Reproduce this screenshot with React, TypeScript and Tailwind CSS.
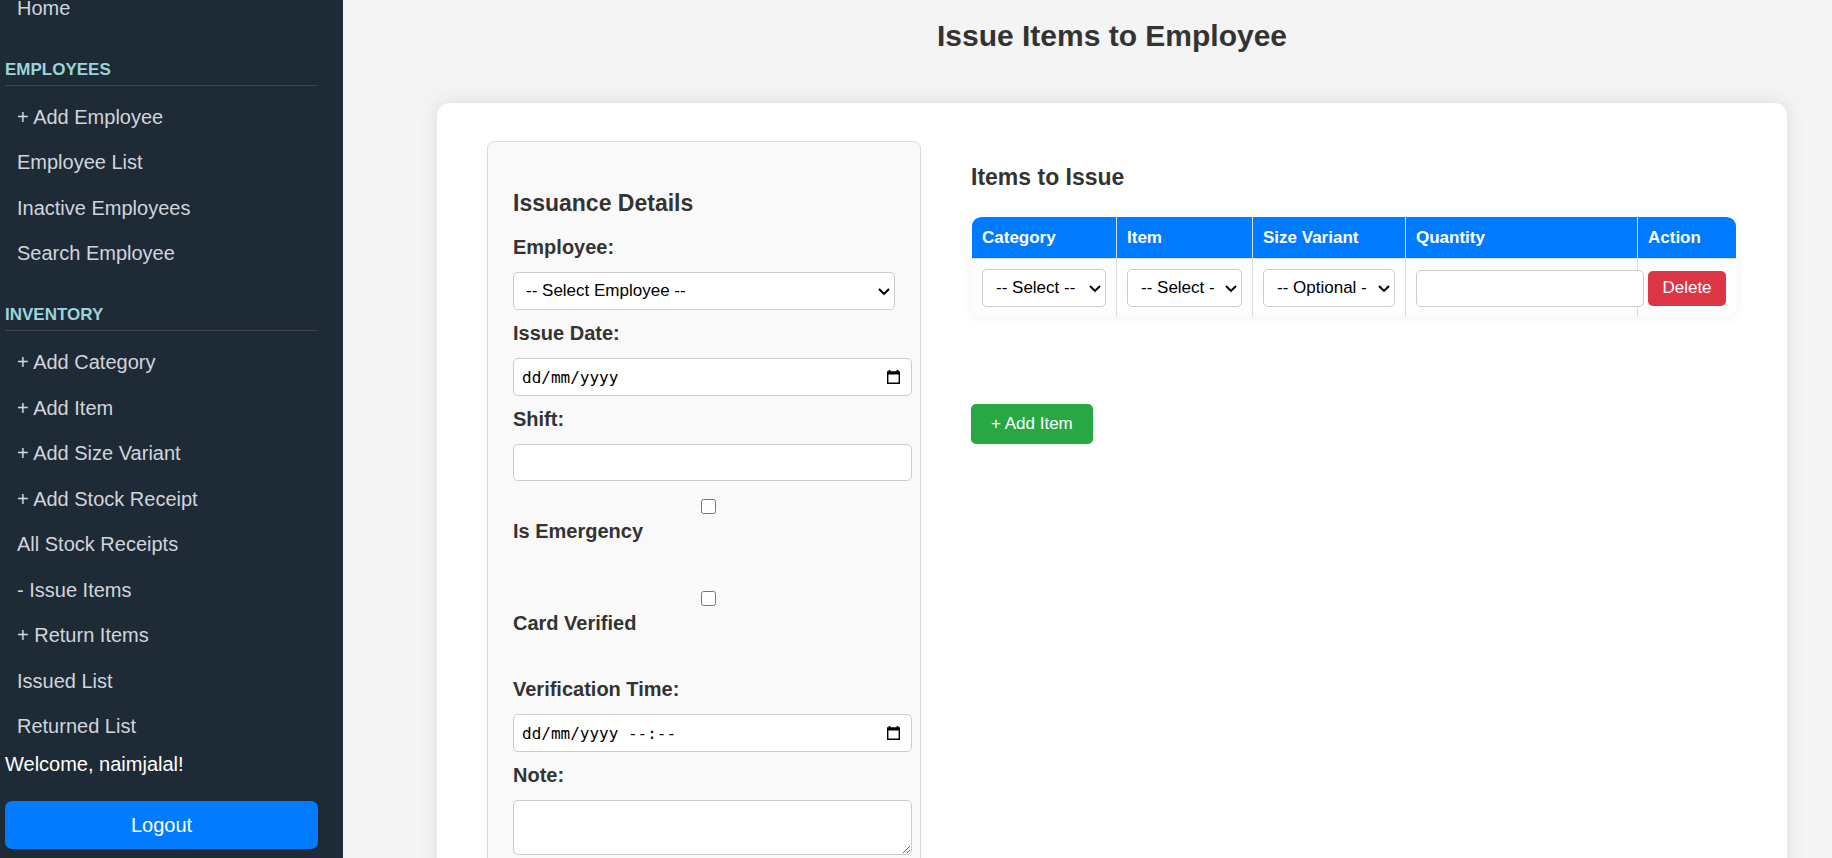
import React from 'react';

const employeeLinks = ['+ Add Employee', 'Employee List', 'Inactive Employees', 'Search Employee'];

const inventoryLinks = [
  '+ Add Category',
  '+ Add Item',
  '+ Add Size Variant',
  '+ Add Stock Receipt',
  'All Stock Receipts',
  '- Issue Items',
  '+ Return Items',
  'Issued List',
  'Returned List',
];

const fieldClass =
  'block w-[calc(100%+17px)] h-[37px] px-2 border border-[#ccc] rounded-[5px] bg-white text-[17px] text-black outline-none focus:border-[#007bff]';

function NavLink({ label }: { label: string }) {
  return (
    <li>
      <a href="#" className="block py-2.5 pl-3 text-[20px] leading-[25px] text-[#d1d5db] hover:text-white">
        {label}
      </a>
    </li>
  );
}

function NavSection({ title, links, listClass }: { title: string; links: string[]; listClass: string }) {
  return (
    <section className="mt-[29px]">
      <h4 className="mb-[9px] border-b border-[#444] pb-[5px] text-[17px] leading-5 font-bold text-[#9ad5d8] uppercase">
        {title}
      </h4>
      <ul className={'flex flex-col justify-between ' + listClass}>
        {links.map((l) => (
          <NavLink key={l} label={l} />
        ))}
      </ul>
    </section>
  );
}

function Sidebar() {
  return (
    <aside className="flex h-full w-[343px] shrink-0 flex-col bg-[#1f2a37] pr-[25px] pb-[9px] pl-[5px]">
      <nav className="flex min-h-0 flex-1 flex-col justify-end overflow-hidden">
        <ul>
          <NavLink label="Home" />
        </ul>
        <NavSection title="Employees" links={employeeLinks} listClass="min-h-[181px]" />
        <NavSection title="Inventory" links={inventoryLinks} listClass="min-h-[409px]" />
      </nav>
      <p className="mt-[3px] mb-[25px] text-[20px] leading-6 text-white">Welcome, naimjalal!</p>
      <button type="button" className="h-12 w-full rounded-[7px] bg-[#007bff] text-[20px] text-white">
        Logout
      </button>
    </aside>
  );
}

function Select({ id, label, text, padding }: { id: string; label?: string; text: string; padding: string }) {
  return (
    <div className="relative">
      <select
        id={id}
        aria-label={label}
        className={
          'block h-[38px] w-full appearance-none rounded-[5px] border border-[#ccc] bg-white text-[17px] text-black ' +
          padding
        }
      >
        <option>{text}</option>
      </select>
      <svg
        className="pointer-events-none absolute top-4 right-[5px] h-2 w-3"
        viewBox="0 0 12 8"
        fill="none"
        stroke="#000"
        strokeWidth="2.1"
      >
        <path d="M1 1.1 L6 5.9 L11 1.1" />
      </svg>
    </div>
  );
}

function Label({ htmlFor, children }: { htmlFor: string; children: React.ReactNode }) {
  return (
    <label htmlFor={htmlFor} className="block text-[20px] leading-6 font-bold">
      {children}
    </label>
  );
}

function DateField({ id, format }: { id: string; format: string }) {
  return (
    <div className="relative w-[calc(100%+17px)]">
      <input
        id={id}
        type="text"
        placeholder={format}
        className="block h-[38px] w-full rounded-[5px] border border-[#ccc] bg-white px-2 font-['DejaVu_Sans_Mono',monospace] text-[16px] text-black outline-none placeholder:text-black focus:border-[#007bff]"
      />
      <button type="button" aria-label="Open calendar" className="absolute top-3 right-3">
        <svg className="block h-[14px] w-[13px]" viewBox="0 0 13 14" fill="none">
          <path d="M0.7 2.2 H12.3 V13.2 H0.7 Z" stroke="#000" strokeWidth="1.4" />
          <path d="M0 1.4 H13 V4.4 H0 Z M1.6 0 H3.4 V2 H1.6 Z M9.6 0 H11.4 V2 H9.6 Z" fill="#000" />
        </svg>
      </button>
    </div>
  );
}

function CheckField({ id, label }: { id: string; label: string }) {
  return (
    <div className="flex flex-col gap-[5px]">
      <input id={id} type="checkbox" className="ml-[188px] block size-[15px]" />
      <Label htmlFor={id}>{label}</Label>
    </div>
  );
}

function Field({ id, label, children }: { id: string; label: string; children: React.ReactNode }) {
  return (
    <div className="flex flex-col gap-[13px]">
      <Label htmlFor={id}>{label}</Label>
      {children}
    </div>
  );
}

function IssuanceDetails() {
  return (
    <section className="rounded-[7px] border border-[#ddd] bg-[#f9f9f9] px-[25px] pt-[47px] pb-[25px]">
      <h3 className="mb-[18px] text-[23px] leading-7 font-bold">Issuance Details</h3>
      <div className="flex flex-col gap-[11px]">
        <Field id="employee" label="Employee:">
          <Select id="employee" text="-- Select Employee --" padding="pl-3 pr-6" />
        </Field>
        <Field id="issue-date" label="Issue Date:">
          <DateField id="issue-date" format="dd/mm/yyyy" />
        </Field>
        <Field id="shift" label="Shift:">
          <input id="shift" type="text" className={fieldClass} />
        </Field>
      </div>
      <div className="mt-[18px] mb-[42px] flex flex-col gap-12">
        <CheckField id="emergency" label="Is Emergency" />
        <CheckField id="verified" label="Card Verified" />
      </div>
      <div className="flex flex-col gap-[11px]">
        <Field id="verification-time" label="Verification Time:">
          <DateField id="verification-time" format="dd/mm/yyyy --:--" />
        </Field>
        <Field id="note" label="Note:">
          <textarea
            id="note"
            className="block h-[55px] w-[calc(100%+17px)] rounded-[5px] border border-[#ccc] bg-white px-2 text-[17px] text-black outline-none"
          />
        </Field>
      </div>
    </section>
  );
}

const columns = [
  { name: 'Category', width: 'w-[145px]' },
  { name: 'Item', width: 'w-[136px]' },
  { name: 'Size Variant', width: 'w-[153px]' },
  { name: 'Quantity', width: 'w-[232px]' },
  { name: 'Action', width: 'w-[98px]' },
];

function ItemsToIssue() {
  const cell = 'border-r border-[#ddd] last:border-r-0 p-2.5 align-middle';
  return (
    <section className="pt-[22px]">
      <h3 className="mb-[26px] text-[23px] leading-7 font-bold">Items to Issue</h3>
      <div className="overflow-hidden rounded-[10px] bg-[#fdfdfd] px-px shadow-[0_2px_12px_rgba(0,0,0,0.05)]">
        <table className="w-full table-fixed border-separate border-spacing-0 overflow-hidden rounded-t-[9px]">
          <thead>
            <tr className="bg-[#007bff] text-left text-[17px] leading-[21px] font-bold text-white">
              {columns.map((c) => (
                <th key={c.name} scope="col" className={'border-b ' + cell + ' ' + c.width}>
                  {c.name}
                </th>
              ))}
            </tr>
          </thead>
          <tbody>
            <tr>
              <td className={cell}>
                <Select id="category" label="Category" text="-- Select --" padding="pl-[13px] pr-6" />
              </td>
              <td className={cell}>
                <Select id="item" label="Item" text="-- Select --" padding="pl-[13px] pr-[27px]" />
              </td>
              <td className={cell}>
                <Select id="size" label="Size variant" text="-- Optional --" padding="pl-[13px] pr-[27px]" />
              </td>
              <td className={cell}>
                <input type="number" aria-label="Quantity" className={fieldClass} />
              </td>
              <td className={cell}>
                <button
                  type="button"
                  className="block h-[35px] w-full rounded-[5px] bg-[#dc3545] text-[17px] text-white"
                >
                  Delete
                </button>
              </td>
            </tr>
          </tbody>
        </table>
      </div>
      <button type="button" className="mt-[87px] h-10 rounded-[5px] bg-[#28a745] px-5 text-[17px] text-white">
        + Add Item
      </button>
    </section>
  );
}

export default function App() {
  return (
    <div className="flex h-screen overflow-hidden bg-[#f4f4f4] font-['Liberation_Sans',Arial,sans-serif] text-[#333]">
      <Sidebar />
      <main className="min-w-0 flex-1 overflow-y-auto pt-[18px] pr-[45px] pb-8 pl-[94px] [scrollbar-width:none]">
        <h2 className="mb-[49px] text-center text-[30px] leading-9 font-bold">Issue Items to Employee</h2>
        <form className="grid grid-cols-[minmax(0,434fr)_minmax(0,766fr)] gap-[50px] rounded-[13px] bg-white px-[50px] py-[38px] shadow-[0_0_20px_rgba(0,0,0,0.1)]">
          <IssuanceDetails />
          <ItemsToIssue />
        </form>
      </main>
    </div>
  );
}
